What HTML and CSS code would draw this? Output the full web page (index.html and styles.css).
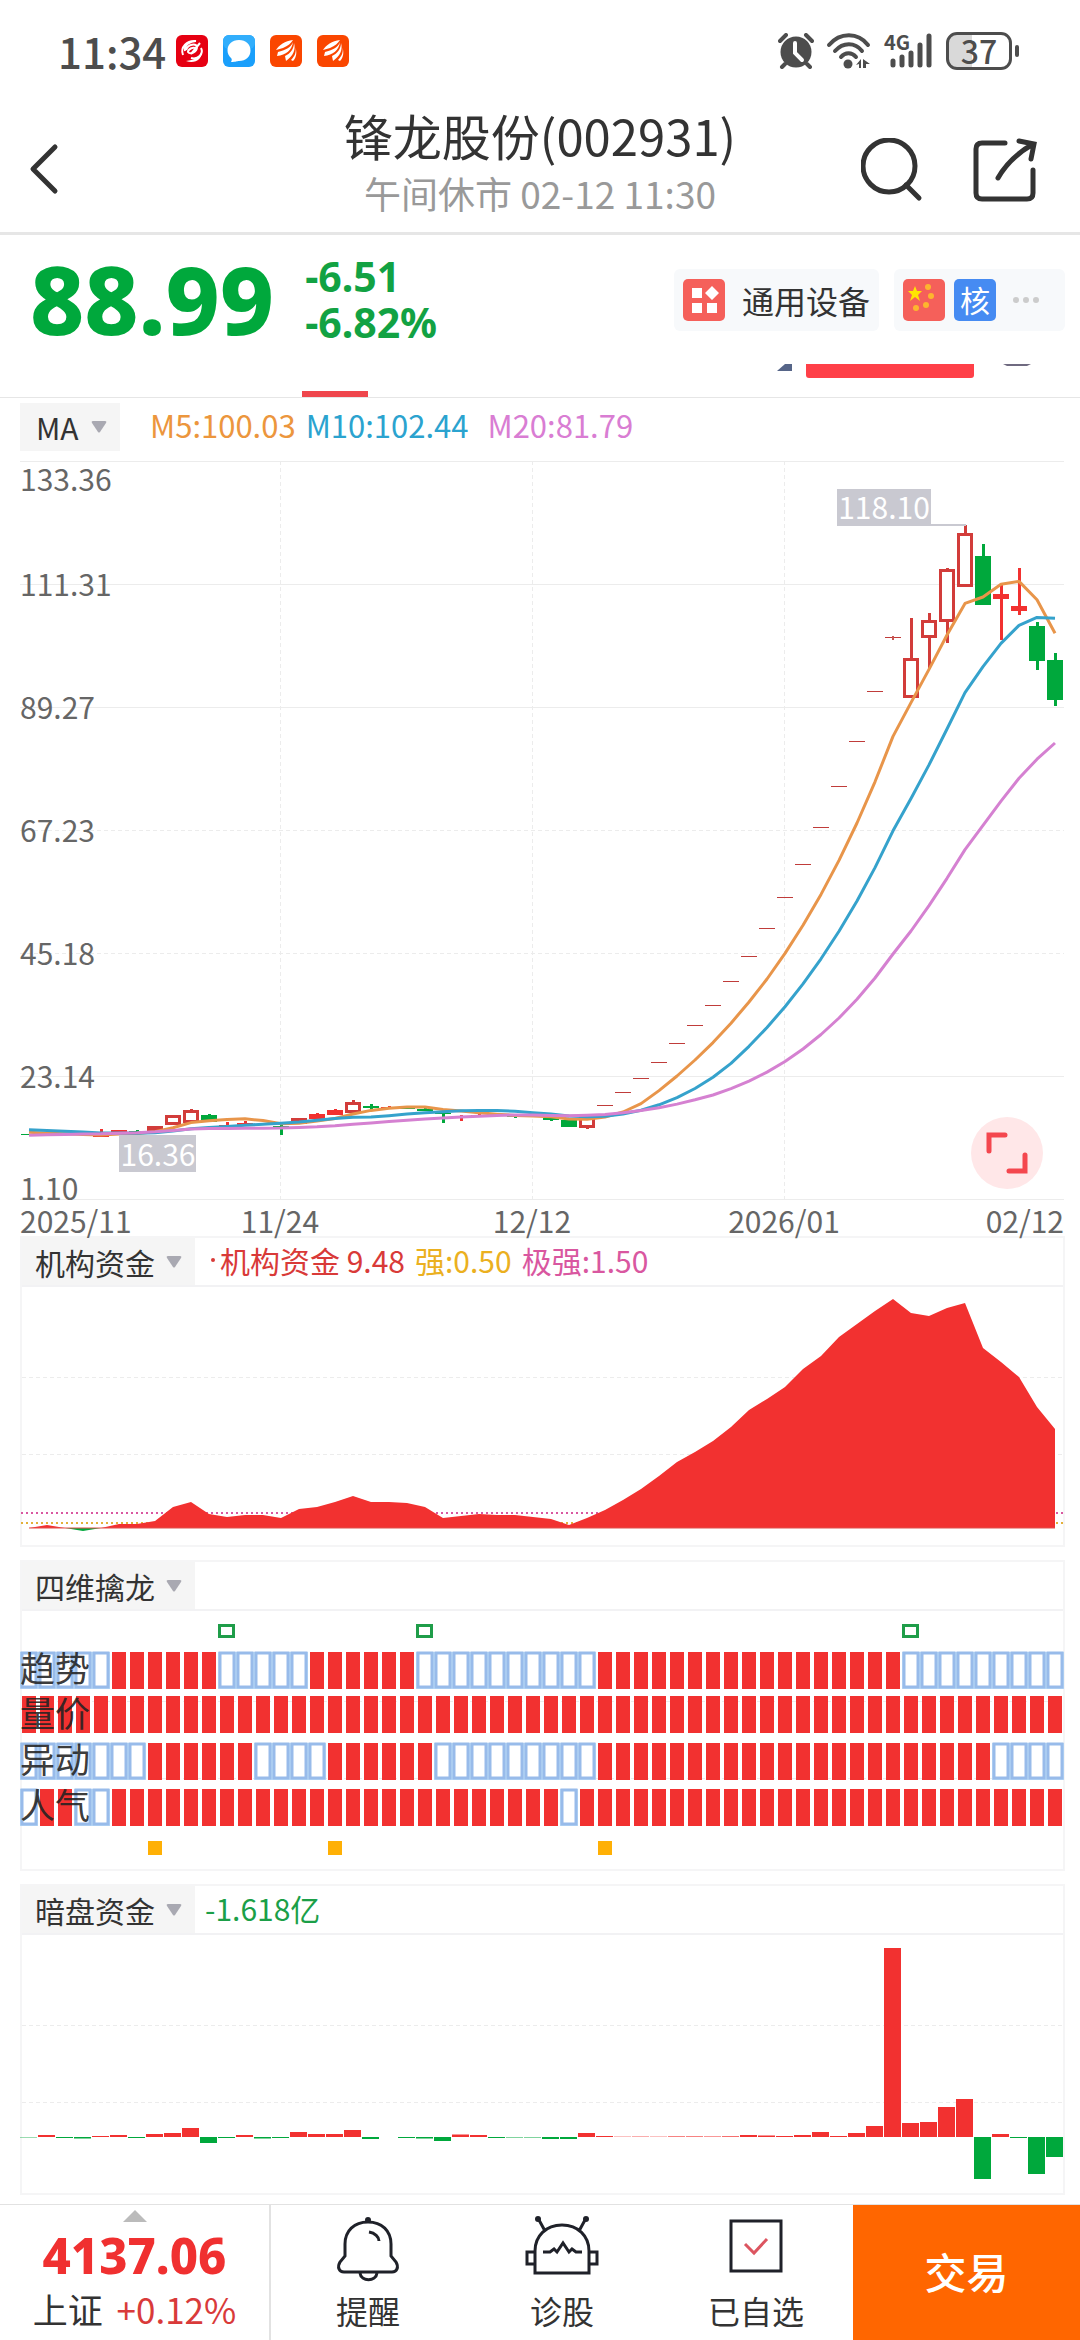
FILE: index.html
```html
<!DOCTYPE html>
<html lang="zh-CN">
<head>
    <meta charset="UTF-8">
    <meta name="viewport" content="width=device-width, initial-scale=1.0">
    <title>锋龙股份(002931)</title>
    <link rel="stylesheet" href="styles.css">
</head>
<body>
    <div class="status-bar">
        <span class="clock">11:34</span>
        <div class="app-icons">
            <svg viewBox="0 0 32 32"><rect width="32" height="32" rx="6" fill="#e60012"/><path d="M7 20c-3-8 4-15 13-14-6 0-12 4-11 10M10 15c2-6 10-7 11-3 0 5-7 8-9 5 0-3 5-5 7-4M24 8l-9 11M25 13c3 6-3 12-10 10" fill="none" stroke="#fff" stroke-width="2"/><path d="M10 26c9 3 17-2 15-9-2 6-7 8-15 9z" fill="#fff"/></svg>
            <svg viewBox="0 0 32 32"><rect width="32" height="32" rx="6" fill="#1a9ffb"/><rect width="32" height="14" rx="6" fill="#31aefc"/><path d="M16 5c7 0 11.500 4.500 11.500 10.500S23 26 16 26c-2 0-3 1-8 1 1-2 1-3 0-4-2-2-3.500-4-3.500-7.500C4.500 9.500 9 5 16 5z" fill="#fff"/></svg>
            <svg viewBox="0 0 32 32"><rect width="32" height="32" rx="6" fill="#fa4600"/><path d="M23 5C15 6 9 10 6 15l7-2c5-2 8-5 10-8zM23 7c-2 6-8 8-15 10l-1 4c9-1 15-6 16-14zM24 8c0 6-4 11-9 13l1 5c7-5 10-11 8-18zM25 11c2 5 0 10-4 14l2 1c4-4 4-10 2-15z" fill="#fff"/></svg>
            <svg viewBox="0 0 32 32"><rect width="32" height="32" rx="6" fill="#fa4600"/><path d="M23 5C15 6 9 10 6 15l7-2c5-2 8-5 10-8zM23 7c-2 6-8 8-15 10l-1 4c9-1 15-6 16-14zM24 8c0 6-4 11-9 13l1 5c7-5 10-11 8-18zM25 11c2 5 0 10-4 14l2 1c4-4 4-10 2-15z" fill="#fff"/></svg>
        </div>
        <div class="system-icons">
            <svg width="36" height="36" viewBox="0 0 36 36"><circle cx="18" cy="19" r="15.500" fill="#4d4d4d"/><path d="M2 8l6-6M34 8l-6-6M7 31l-3 3M29 31l3 3" stroke="#4d4d4d" stroke-width="4" stroke-linecap="round"/><path d="M17 10v10l7 7" fill="none" stroke="#fff" stroke-width="4" stroke-linecap="round"/></svg>
            <svg width="46" height="36" viewBox="0 0 46 36"><g fill="none" stroke="#4d4d4d" stroke-width="4" stroke-linecap="round"><path d="M3 12C14-1 32-1 42 12"/><path d="M9 18c8-9 20-9 27 0"/><path d="M15 24c4-5 11-5 15 0"/></g><circle cx="22" cy="31" r="4.500" fill="#4d4d4d"/><path d="M30 32l5-6v9h-2v-4zM37 26l7 5h-4v4h-3z" fill="#4d4d4d"/></svg>
            <span class="signal">
                <span class="network">4G</span>
                <svg width="44" height="36" viewBox="0 0 44 36"><path d="M3 28v4M12 24v8M21 20v12M30 12v20M39 3v29" stroke="#4d4d4d" stroke-width="5" stroke-linecap="round"/></svg>
            </span>
            <span class="battery">37</span>
        </div>
    </div>

    <header class="header">
        <button class="icon-button" aria-label="返回">
            <svg width="32" height="54" viewBox="0 0 32 54"><path d="M27 5L5 27l22 22" fill="none" stroke="#333" stroke-width="5" stroke-linecap="round" stroke-linejoin="round"/></svg>
        </button>
        <div class="title">
            <h1>锋龙股份(002931)</h1>
            <p>午间休市 02-12 11:30</p>
        </div>
        <div class="header-actions">
            <button class="icon-button" aria-label="搜索">
                <svg width="64" height="64" viewBox="0 0 64 64"><circle cx="28" cy="28" r="26" fill="none" stroke="#333" stroke-width="5"/><path d="M45 47l13 13" stroke="#333" stroke-width="5" stroke-linecap="round"/></svg>
            </button>
            <button class="icon-button" aria-label="分享">
                <svg width="64" height="64" viewBox="0 0 64 64"><path d="M32 5H9Q3 5 3 11v44q0 6 6 6h45q6 0 6-6V32" fill="none" stroke="#333" stroke-width="5" stroke-linecap="round"/><path d="M25 40Q36 20 60 6M46 3l15 3-3 15" fill="none" stroke="#333" stroke-width="5" stroke-linecap="round"/></svg>
            </button>
        </div>
    </header>

    <section class="quote">
        <div class="price">88.99</div>
        <div class="change">
            <span>-6.51</span>
            <span>-6.82%</span>
        </div>
        <a class="tag" href="#industry">
            <svg width="42" height="42" viewBox="0 0 42 42"><rect width="42" height="42" rx="5" fill="#f5605a"/><path d="M9 9h10v10H9zM9 24h10v10H9zM24 24h10v10H24zM29 7l7 7-7 7-7-7z" fill="#fff"/></svg>
            <span>通用设备</span>
        </a>
        <a class="tag tag-more" href="#concept" aria-label="概念">
            <svg width="42" height="42" viewBox="0 0 42 42"><rect width="42" height="42" rx="5" fill="#f5605a"/><path d="M12 7l2 5h5l-4 4 2 6-5-4-5 4 2-6-4-4h5z" fill="#ffe600"/><g fill="#fdb52e"><circle cx="25" cy="8" r="3"/><circle cx="28" cy="17" r="3"/><circle cx="23" cy="26" r="3"/><circle cx="13" cy="29" r="3"/></g></svg>
            <span class="tag-char">核</span>
            <svg width="28" height="8" viewBox="0 0 28 8"><g fill="#ccc"><circle cx="4" cy="4" r="3"/><circle cx="14" cy="4" r="3"/><circle cx="24" cy="4" r="3"/></g></svg>
        </a>
    </section>

    <div class="tab-strip">
        <svg viewBox="0 0 1080 33"><path d="M777 7l8-7h7v7z" fill="#566588"/><path d="M806 0h168v11q0 3-3 3H809q-3 0-3-3z" fill="#ff4048"/><path d="M1003 0h28l-4 2h-20z" fill="#6f6a80"/><rect x="302" y="27" width="66" height="6" fill="#ef464c"/></svg>
    </div>

    <main>
        <section class="kline">
            <div class="kline-head">
                <span class="picker">
                    <select aria-label="主图指标"><option>MA</option></select>
                    <svg viewBox="0 0 16 12"><path d="M2 0h12q2 0 1 2L9 11q-1 1-2 0L1 2Q0 0 2 0z" fill="#a9a9b2"/></svg>
                </span>
                <span class="legend ma5">M5:100.03</span>
                <span class="legend ma10">M10:102.44</span>
                <span class="legend ma20">M20:81.79</span>
            </div>
            <div class="kline-chart">
                <svg id="klineChart" class="chart" viewBox="0 461 1045 775"></svg>
                <button class="expand" aria-label="全屏">
                    <svg width="42" height="42" viewBox="0 0 42 42"><path d="M3 19V3h16M39 23v16H23" fill="none" stroke="#f4474e" stroke-width="5" stroke-linecap="round"/></svg>
                </button>
            </div>
        </section>

        <section class="panel">
            <div class="panel-head">
                <span class="picker">
                    <select aria-label="副图一指标"><option>机构资金</option></select>
                    <svg viewBox="0 0 16 12"><path d="M2 0h12q2 0 1 2L9 11q-1 1-2 0L1 2Q0 0 2 0z" fill="#a9a9b2"/></svg>
                </span>
                <span class="legend fund"><i class="dot"></i>机构资金 9.48</span>
                <span class="legend strong">强:0.50</span>
                <span class="legend extreme">极强:1.50</span>
            </div>
            <svg id="fundChart" class="chart" viewBox="2 0 1041 258"></svg>
        </section>

        <section class="panel">
            <div class="panel-head">
                <span class="picker">
                    <select aria-label="副图二指标"><option>四维擒龙</option></select>
                    <svg viewBox="0 0 16 12"><path d="M2 0h12q2 0 1 2L9 11q-1 1-2 0L1 2Q0 0 2 0z" fill="#a9a9b2"/></svg>
                </span>
            </div>
            <svg id="dragonChart" class="chart" viewBox="2 0 1041 258"></svg>
        </section>

        <section class="panel">
            <div class="panel-head">
                <span class="picker">
                    <select aria-label="副图三指标"><option>暗盘资金</option></select>
                    <svg viewBox="0 0 16 12"><path d="M2 0h12q2 0 1 2L9 11q-1 1-2 0L1 2Q0 0 2 0z" fill="#a9a9b2"/></svg>
                </span>
                <span class="legend dark">-1.618亿</span>
            </div>
            <svg id="darkChart" class="chart" viewBox="2 0 1041 258"></svg>
        </section>
    </main>

    <nav class="bottom-nav">
        <a class="index" href="#index">
            <svg width="24" height="12" viewBox="0 0 24 12"><path d="M12 0l12 12H0z" fill="#bbb"/></svg>
            <strong>4137.06</strong>
            <span class="index-row">上证 <em>+0.12%</em></span>
        </a>
        <button class="nav-item">
            <svg width="72" height="66" viewBox="0 0 72 66"><g fill="none" stroke="#1f2129" stroke-width="3"><path d="M13 40V28C13 15 22 6 36 6s23 9 23 22v12l5 6c3 5 1 10-4 10H12c-5 0-7-5-4-10z"/><path d="M28 57c1 9 16 9 17 0M37 16c6 1 10 5 10 9"/></g><circle cx="36" cy="4" r="3" fill="#1f2129"/></svg>
            <span>提醒</span>
        </button>
        <button class="nav-item">
            <svg width="74" height="66" viewBox="0 0 74 66"><g fill="none" stroke="#1f2129" stroke-width="3"><path d="M10 57V35C10 20 21 9 37 9s27 11 27 26v22zM10 36H2v12h8M64 36h8v12h-8M18 36h7l4-3 3 3 6-9 6 9 3-3 4 3h6M20 15L14 4M54 15l6-11"/></g><circle cx="13" cy="3" r="3" fill="#1f2129"/><circle cx="61" cy="3" r="3" fill="#1f2129"/></svg>
            <span>诊股</span>
        </button>
        <button class="nav-item">
            <svg width="54" height="66" viewBox="0 0 54 66"><path d="M2 5h50v50H2z" fill="none" stroke="#1f2129" stroke-width="3"/><path d="M16 28l9 9 13-14" fill="none" stroke="#dc5560" stroke-width="3"/></svg>
            <span>已自选</span>
        </button>
        <button class="trade">交易</button>
    </nav>

    <script src="script.js"></script>
</body>
</html>
```
FILE: styles.css
```css
* {
    box-sizing: border-box;
}
body {
    margin: 0;
    background-color: #fff;
    color: #333;
    font-family: "Noto Sans CJK SC", sans-serif;
    font-size: 30px;
    line-height: 48px;
}
button, select {
    margin: 0;
    padding: 0;
    border: none;
    background: none;
    color: inherit;
    font: inherit;
    cursor: pointer;
}
a {
    color: inherit;
    text-decoration: none;
}
svg {
    display: block;
}

/* status bar */
.status-bar {
    display: flex;
    align-items: center;
    height: 102px;
    padding: 0 68px 0 58px;
    color: #4d4d4d;
}
.clock {
    font-size: 42px;
    font-weight: 500;
}
.app-icons {
    display: flex;
    gap: 15px;
    margin-left: 10px;
}
.app-icons svg {
    width: 32px;
    height: 32px;
}
.system-icons {
    display: flex;
    align-items: center;
    gap: 12px;
    margin-left: auto;
}
.signal {
    position: relative;
    padding-left: 6px;
}
.network {
    position: absolute;
    left: 0;
    top: -3px;
    font-size: 20px;
    line-height: 24px;
    font-weight: 700;
}
.battery {
    position: relative;
    width: 66px;
    height: 38px;
    border: 3px solid #4d4d4d;
    border-radius: 11px;
    background: linear-gradient(90deg, #d9d9d9 38%, #fff 38%);
    font-size: 32px;
    line-height: 30px;
    font-weight: 500;
    text-align: center;
}
.battery::after {
    content: "";
    position: absolute;
    right: -10px;
    top: 10px;
    width: 4px;
    height: 12px;
    border-radius: 2px;
    background-color: #4d4d4d;
}

/* header */
.header {
    display: grid;
    grid-template-columns: 1fr auto 1fr;
    align-items: center;
    height: 133px;
    padding: 0 28px;
    border-bottom: 3px solid #e6e6e6;
}
.header > .icon-button {
    justify-self: start;
    padding-top: 4px;
}
.title {
    padding-bottom: 8px;
    text-align: center;
}
.title h1 {
    margin: 0;
    font-size: 49px;
    line-height: 60px;
    font-weight: 400;
}
.title p {
    margin: 0;
    font-size: 37px;
    line-height: 56px;
    color: #999;
}
.header-actions {
    display: flex;
    justify-content: flex-end;
    gap: 48px;
    padding: 5px 15px 0 0;
}

/* quote */
.quote {
    display: flex;
    align-items: center;
    height: 129px;
    padding: 0 15px 0 30px;
}
.price {
    font-family: "Noto Sans", sans-serif;
    font-size: 94px;
    line-height: 129px;
    font-weight: 800;
    color: #00a83c;
}
.change {
    display: flex;
    flex-direction: column;
    margin-left: 31px;
    padding-bottom: 2px;
    font-family: "Noto Sans", sans-serif;
    font-size: 41px;
    line-height: 46px;
    font-weight: 700;
    color: #12a243;
}
.tag {
    display: flex;
    align-items: center;
    gap: 17px;
    height: 62px;
    margin-left: auto;
    padding: 0 9px;
    border-radius: 6px;
    background-color: #f7f9fb;
    font-size: 32px;
}
.tag-more {
    gap: 9px;
    margin-left: 15px;
    padding-right: 25px;
}
.tag-char {
    width: 42px;
    height: 42px;
    margin-right: 7px;
    border-radius: 5px;
    background-color: #468bf2;
    color: #fff;
    font-size: 30px;
    line-height: 40px;
    text-align: center;
}
.tab-strip {
    border-bottom: 1px solid #e6e6e6;
}

/* main chart */
main {
    padding: 0 15px 9px 20px;
}
.kline-head {
    display: flex;
    align-items: center;
    gap: 10px;
    height: 63px;
    padding-bottom: 6px;
}
.picker {
    position: relative;
    display: block;
    background-color: #f5f5f5;
}
.picker select {
    display: block;
    height: 48px;
    padding: 0 41px 3px 16px;
    appearance: none;
}
.picker svg {
    position: absolute;
    right: 13px;
    top: 18px;
    width: 16px;
    height: 12px;
    pointer-events: none;
}
.legend {
    padding-bottom: 3px;
}
.kline-head .legend {
    font-size: 31px;
}
.ma5 {
    margin-left: 20px;
    color: #ec963d;
}
.ma10 {
    color: #2ba3cf;
}
.ma20 {
    margin-left: 9px;
    color: #d97dd3;
}
.kline-chart {
    position: relative;
}
.chart {
    width: 100%;
    height: auto;
    overflow: visible;
}
.chart text {
    font-size: 30px;
    fill: #666;
}
.chart .badge-text {
    fill: #fff;
}
.chart .row-name {
    font-size: 35px;
    fill: #222;
    fill-opacity: 0.9;
}
.expand {
    position: absolute;
    right: 22px;
    bottom: 47px;
    display: flex;
    align-items: center;
    justify-content: center;
    width: 72px;
    height: 72px;
    border-radius: 50%;
    background-color: #ffe7e8;
}

/* indicator panels */
.panel {
    margin-bottom: 13px;
    border: 2px solid #f5f5f6;
}
.panel:last-child {
    margin-bottom: 0;
}
.panel-head {
    display: flex;
    align-items: center;
    gap: 10px;
    height: 49px;
    border-bottom: 2px solid #f2f2f4;
}
.panel-head select {
    height: 47px;
    padding-left: 13px;
    padding-right: 40px;
}
.fund {
    display: flex;
    align-items: center;
    gap: 5px;
    margin-left: 6px;
    color: #d93a38;
}
.dot {
    width: 4px;
    height: 4px;
    border-radius: 50%;
    background-color: #d93a38;
}
.strong {
    color: #ebb01f;
}
.extreme {
    color: #d957a0;
}
.dark {
    color: #1b9f48;
}

/* bottom bar */
.bottom-nav {
    display: grid;
    grid-template-columns: 271px repeat(3, 1fr) 227px;
    height: 136px;
    border-top: 1px solid #e2e2e2;
}
.index {
    display: flex;
    flex-direction: column;
    align-items: center;
    padding-top: 5px;
    border-right: 2px solid #e2e2e2;
}
.index strong {
    font-family: "Noto Sans", sans-serif;
    font-size: 49px;
    line-height: 66px;
    font-weight: 800;
    color: #f03030;
}
.index-row {
    font-size: 35px;
    line-height: 42px;
}
.index-row em {
    margin-left: 6px;
    font-style: normal;
    color: #d93a3a;
}
.nav-item {
    display: flex;
    flex-direction: column;
    align-items: center;
    padding-top: 11px;
    font-size: 32px;
    line-height: 56px;
}
.trade {
    padding-bottom: 3px;
    background-color: #ff6600;
    color: #fff;
    font-size: 42px;
    font-weight: 500;
}
```
FILE: script.js
```js
const RED = '#f23130';
const GREEN = '#00a83c';
const STEP = 18;   // width of one trading day

function draw(svg, tag, attrs, text) {
    const el = document.createElementNS('http://www.w3.org/2000/svg', tag);
    for (const key in attrs) {
        el.setAttribute(key, attrs[key]);
    }
    if (text) {
        el.textContent = text;
    }
    svg.appendChild(el);
}

function gridLine(svg, x1, y1, x2, y2, dashed) {
    const attrs = { x1, y1, x2, y2, stroke: '#ececec', 'stroke-width': 1 };
    if (dashed) {
        attrs['stroke-dasharray'] = '4 3';
    }
    draw(svg, 'line', attrs);
}

// ---- K line ----
// [day, type, high, top, bottom, low], type: h = hollow red, r = red, g = green
const candles = [
    [0, 'g', 1135, 1134, 1135, 1135], [2, 'g', 1133, 1134, 1135, 1135], [4, 'r', 1129, 1135, 1137, 1137],
    [5, 'r', 1130, 1130, 1132, 1132], [6, 'g', 1130, 1131, 1132, 1132], [7, 'h', 1126, 1126, 1132, 1132],
    [8, 'h', 1115, 1115, 1125, 1125], [9, 'h', 1109, 1110, 1123, 1123], [10, 'g', 1114, 1115, 1122, 1122],
    [11, 'r', 1122, 1125, 1127, 1127], [12, 'r', 1121, 1123, 1125, 1125], [14, 'g', 1124, 1126, 1127, 1135],
    [15, 'h', 1118, 1118, 1124, 1124], [16, 'r', 1113, 1114, 1119, 1121], [17, 'r', 1109, 1110, 1115, 1115],
    [18, 'h', 1100, 1102, 1113, 1113], [19, 'g', 1104, 1106, 1108, 1111], [20, 'r', 1106, 1107, 1109, 1109],
    [21, 'g', 1106, 1108, 1109, 1109], [22, 'g', 1108, 1109, 1111, 1111], [23, 'g', 1110, 1113, 1114, 1123],
    [24, 'r', 1115, 1116, 1118, 1121], [25, 'r', 1114, 1115, 1117, 1117], [26, 'g', 1113, 1114, 1115, 1115],
    [27, 'g', 1114, 1116, 1117, 1118], [29, 'g', 1116, 1118, 1120, 1121], [30, 'g', 1119, 1120, 1127, 1127],
    [31, 'h', 1114, 1116, 1128, 1129],
    [49, 'h', 618, 658, 698, 698], [50, 'h', 613, 620, 638, 668], [51, 'h', 568, 569, 622, 643],
    [52, 'h', 525, 533, 587, 587], [53, 'g', 544, 556, 605, 605], [54, 'r', 585, 594, 599, 640],
    [55, 'r', 568, 606, 611, 615], [56, 'g', 622, 626, 661, 670], [57, 'g', 653, 660, 700, 706]
];

// 20 days before the window, then the 58 visible days
const closes = [
    1142, 1142, 1142, 1142, 1142, 1142, 1142, 1142, 1142, 1142,
    1127, 1127, 1127, 1127, 1127, 1129, 1130, 1131, 1132, 1133,
    1135, 1135, 1134, 1135, 1136, 1130, 1132, 1126, 1115, 1110,
    1121, 1125, 1123, 1124, 1126, 1118, 1114, 1110, 1102, 1108,
    1107, 1108, 1110, 1114, 1116, 1116, 1115, 1116, 1117, 1120,
    1127, 1116, 1105, 1092, 1078, 1062, 1043, 1025, 1005, 981,
    956, 928, 897, 864, 827, 786, 741, 691, 637, 658,
    620, 569, 533, 605, 594, 606, 661, 700
];

function movingAverage(days) {
    const points = [];
    for (let i = 20; i < closes.length; i++) {
        const part = closes.slice(i - days + 1, i + 1);
        const avg = part.reduce((a, b) => a + b, 0) / days;
        points.push((i - 20) * STEP + 9 + ',' + avg.toFixed(1));
    }
    return points.join(' ');
}

function drawKline() {
    const svg = document.getElementById('klineChart');
    [461, 584, 707, 830, 953, 1076, 1199].forEach((y, i) => gridLine(svg, 0, y + 0.5, 1044, y + 0.5, i === 3 || i === 4));
    [260, 512, 764].forEach(x => gridLine(svg, x + 0.5, 461, x + 0.5, 1199, true));

    // limit-up days have no body
    for (let i = 32; i < 49; i++) {
        const y = closes[i + 20];
        draw(svg, 'rect', { x: i * STEP + 1, y: y, width: 16, height: 1, fill: '#c03c3a' });
    }
    draw(svg, 'rect', { x: 48 * STEP + 8, y: 636, width: 2, height: 4, fill: '#c85552' });

    candles.forEach(([i, type, high, top, bottom, low]) => {
        const color = type === 'g' ? GREEN : type === 'r' ? RED : '#d23c3a';
        draw(svg, 'rect', { x: i * STEP + 8, y: high, width: 3, height: Math.max(top - high, 0), fill: color });
        draw(svg, 'rect', { x: i * STEP + 8, y: bottom, width: 3, height: Math.max(low - bottom, 0), fill: color });
        if (type === 'h') {
            draw(svg, 'rect', { x: i * STEP + 2.5, y: top + 1.5, width: 13, height: bottom - top - 3, fill: '#fff', stroke: color, 'stroke-width': 3 });
        } else {
            draw(svg, 'rect', { x: i * STEP + 1, y: top, width: 16, height: bottom - top, fill: color });
        }
    });

    [[5, '#e8954a'], [10, '#35a2cc'], [20, '#d581d1']].forEach(([days, color]) => {
        draw(svg, 'polyline', { points: movingAverage(days), fill: 'none', stroke: color, 'stroke-width': 3, 'stroke-linejoin': 'round' });
    });

    draw(svg, 'rect', { x: 817, y: 489, width: 94, height: 36, fill: '#c9c9d1' });
    draw(svg, 'rect', { x: 817, y: 524, width: 129, height: 2, fill: '#c9c9d1' });
    draw(svg, 'text', { x: 864, y: 519, 'text-anchor': 'middle', class: 'badge-text' }, '118.10');
    draw(svg, 'rect', { x: 99, y: 1135, width: 77, height: 37, fill: '#c9c9d1' });
    draw(svg, 'text', { x: 138, y: 1166, 'text-anchor': 'middle', class: 'badge-text' }, '16.36');

    const prices = [['133.36', 491], ['111.31', 596], ['89.27', 719], ['67.23', 842], ['45.18', 965], ['23.14', 1088], ['1.10', 1200]];
    prices.forEach(([text, y]) => draw(svg, 'text', { x: 0, y: y }, text));
    const dates = [['2025/11', 0, 'start'], ['11/24', 260, 'middle'], ['12/12', 512, 'middle'], ['2026/01', 764, 'middle'], ['02/12', 1044, 'end']];
    dates.forEach(([text, x, anchor]) => draw(svg, 'text', { x: x, y: 1233, 'text-anchor': anchor }, text));
}

// ---- 机构资金 ----
const fund = [
    0, 3, 0, -3, 0, 4, 4, 7, 21, 26, 14, 11, 13, 13, 10, 19, 21, 26, 32, 26,
    26, 25, 21, 10, 12, 14, 13, 13, 11, 9, 3, 10, 18, 28, 39, 52, 66, 76, 87, 101,
    118, 129, 141, 159, 172, 191, 204, 217, 229, 215, 212, 220, 225, 180, 166, 151, 121, 99
];

function drawFund() {
    const svg = document.getElementById('fundChart');
    const base = 241;
    gridLine(svg, 2, 90.5, 1043, 90.5, true);
    gridLine(svg, 2, 167.5, 1043, 167.5, true);
    draw(svg, 'line', { x1: 1, y1: 226, x2: 1044, y2: 226, stroke: '#d957a0', 'stroke-width': 2, 'stroke-dasharray': '2 3' });
    draw(svg, 'line', { x1: 1, y1: 236, x2: 1044, y2: 236, stroke: '#e3b03a', 'stroke-width': 2, 'stroke-dasharray': '2 3' });
    const area = sign => fund.map((v, i) => (i * STEP + 9) + ',' + (base - (v * sign > 0 ? v : 0))).join(' ') + ' 1035,' + base + ' 9,' + base;
    draw(svg, 'polygon', { points: area(1), fill: RED });
    draw(svg, 'polygon', { points: area(-1), fill: GREEN });
    draw(svg, 'line', { x1: 9, y1: base, x2: 1035, y2: base, stroke: '#e0504c', 'stroke-width': 1 });
}

// ---- 四维擒龙 ----
// each row lists its runs of days, starting with a hollow run
const rows = [
    ['趋势', 41, [5, 6, 5, 6, 10, 17, 9], 71],
    ['量价', 85, [0, 58], 116],
    ['异动', 132, [7, 6, 4, 6, 9, 22, 4], 162],
    ['人气', 178, [1, 2, 2, 25, 1, 27], 208]
];

function drawDragon() {
    const svg = document.getElementById('dragonChart');
    gridLine(svg, 2, 90.5, 1043, 90.5, true);
    gridLine(svg, 2, 167.5, 1043, 167.5, true);
    rows.forEach(([name, y, runs, baseline]) => {
        let day = 0;
        runs.forEach((count, n) => {
            for (let k = 0; k < count; k++, day++) {
                if (n % 2) {
                    draw(svg, 'rect', { x: day * STEP + 2, y: y, width: 14, height: 37, fill: RED });
                } else {
                    draw(svg, 'rect', { x: day * STEP, y: y, width: 18, height: 37, fill: '#bddcf8' });
                    draw(svg, 'rect', { x: day * STEP + 2, y: y + 1, width: 14, height: 34, fill: '#fff', stroke: '#98bbea', 'stroke-width': 3 });
                }
            }
        });
        draw(svg, 'text', { x: 0, y: baseline, class: 'row-name' }, name);
    });
    [11, 22, 49].forEach(day => {
        draw(svg, 'rect', { x: day * STEP + 1.5, y: 14.5, width: 14, height: 11, fill: '#fff', stroke: '#1f9d49', 'stroke-width': 3 });
    });
    [7, 17, 32].forEach(day => {
        draw(svg, 'rect', { x: day * STEP + 2, y: 230, width: 14, height: 14, fill: '#ffb005' });
    });
}

// ---- 暗盘资金 ----
const dark = [
    -0.4, 2, -1, -1.5, 1, 2, -1, 3, 4, 9, -6, -1, 2, -1.5, -1, 5, 3, 3, 7, -2,
    0, -1, -1.5, -4, 2.5, 2, -1, -0.5, -0.5, -2, -2, 4, 1, 0.3, 0.4, 0.3, 0.6, 0.6, 0.5, 0.7,
    2, 1.5, 1, 2, 5, 1, 4, 11, 189, 14, 15, 30, 38, -42, 3, -1, -37, -20
];

function drawDark() {
    const svg = document.getElementById('darkChart');
    const base = 202;
    gridLine(svg, 2, 90.5, 1043, 90.5, true);
    gridLine(svg, 2, 167.5, 1043, 167.5, true);
    dark.forEach((v, i) => {
        draw(svg, 'rect', { x: i * STEP, y: v > 0 ? base - v : base, width: 17, height: Math.abs(v), fill: v > 0 ? RED : GREEN });
    });
}

drawKline();
drawFund();
drawDragon();
drawDark();
```
